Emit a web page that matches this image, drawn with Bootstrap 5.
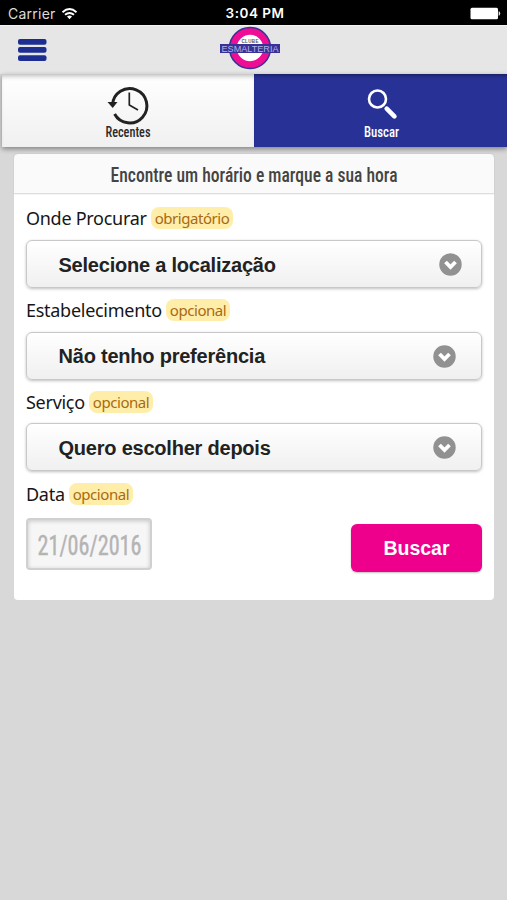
<!DOCTYPE html>
<html lang="pt-BR">
<head>
<meta charset="utf-8">
<meta name="viewport" content="width=device-width, initial-scale=1">
<title>Esmalteria - Buscar</title>
<link href="https://cdn.jsdelivr.net/npm/bootstrap@5.3.0/dist/css/bootstrap.min.css" rel="stylesheet">
<style>
body{background:#d8d8d8;font-family:"Liberation Sans",Arial,sans-serif;min-height:900px;overflow-x:hidden}
svg{display:block;flex:none;overflow:visible}
.condensed{font-family:"Roboto Condensed",Roboto,"Liberation Sans",sans-serif;font-stretch:75%}
.status{height:25px;background:#000;color:#fff;font:14px/25px Inter,sans-serif;padding:2px 5px 0 8px}
.status .carrier{color:#ddd;letter-spacing:.25px}
.status .clock{font-weight:600;font-size:13.5px;letter-spacing:.5px}
.topbar{height:49px;background:#e6e6e6;padding:0 18px;border-top:1px solid #f4f4f4}
.tabs{height:73px;margin-left:2px;box-shadow:0 2px 5px rgba(0,0,0,.4)}
.tab-item{border-radius:0;padding:0;color:#2b2b2b;border:0}
.tab-recent{width:252px;background:linear-gradient(#fff,#f0f0f0);box-shadow:inset 0 5px 5px -3px rgba(0,0,0,.28)}
.tab-search{background:#283296;box-shadow:inset 0 4px 4px -3px rgba(0,0,0,.45)}
.panel{margin:7px 13px 0 14px;height:446px;border:0;border-radius:4px;background:#fff}
.panel-title{height:40px;background:#fafafa;border-bottom:1px solid #dedede;border-radius:4px 4px 0 0!important;padding:0;box-shadow:0 0 1px #999}
.panel-form{padding:0 12px 0 12px}
.field-label{height:43.7px;padding-top:1px;font:18px/24px "Noto Sans","Open Sans",sans-serif;color:#161616;letter-spacing:-.28px}
.first-label{height:46px;padding-top:2px}
.hint{font:15px/22px "Noto Sans",sans-serif;letter-spacing:-.45px;background:#ffeeaa;color:#a86a12;border-radius:8px;height:22px;padding:0 4px;margin-left:4px}
.choice{height:48px;border:1px solid #c8c8c8;border-radius:6px;background:linear-gradient(#fff,#f0f0f0);box-shadow:0 1px 3px rgba(0,0,0,.25);font-weight:700;font-size:20px;letter-spacing:-.22px;color:#222;padding:1px 25px 0 31.5px}
.choice.wide{padding-right:19px}
.date-box{width:126px;height:52px;border:2px solid #d0d0d0;border-radius:4px;background:#f6f6f6;box-shadow:inset 0 1px 4px rgba(0,0,0,.2);margin-top:3px}
.go{width:131px;height:48px;background:#ef008c;border:0;border-radius:6px;color:#fff;font-weight:700;font-size:19.5px;margin-top:9px;padding-top:8px;box-shadow:0 1px 2px rgba(0,0,0,.25)}
.go:hover{background:#d8007f;color:#fff}
</style>
<script src="https://cdn.jsdelivr.net/npm/bootstrap@5.3.0/dist/js/bootstrap.bundle.min.js"></script>
</head>
<body>
<div class="status d-flex align-items-center">
  <div class="col d-flex align-items-center"><span class="carrier">Carrier</span>
    <svg class="ms-1" width="18" height="14" viewBox="0 0 18 14" fill="none" stroke="#fff" stroke-width="1.9"><path d="M2.500 5.200Q9.500-1 16.500 5.200M5 7.800Q9.500 4 14 7.800"/><path d="M7 9.600Q9.500 7.600 12 9.600L9.500 12.300Z" fill="#fff" stroke="none"/></svg>
  </div>
  <span class="clock">3:04 PM</span>
  <div class="col d-flex justify-content-end"><svg width="32" height="13" viewBox="0 0 32 13"><rect x=".5" y=".8" width="27.500" height="11.500" rx="1.500" fill="#fff"/><path d="M29 4.600q1.800 1.900 0 3.800z" fill="#fff" stroke="#fff" stroke-width=".6"/></svg></div>
</div>
<header class="topbar d-flex">
  <button class="btn p-0 border-0 col text-start" aria-label="Menu"><svg width="29" height="24" viewBox="0 0 29 24" fill="#1c2f91"><rect y="1" width="28.500" height="5.700" rx="2"/><rect y="9.100" width="28.500" height="5.700" rx="2"/><rect y="17.200" width="28.500" height="5.700" rx="2"/></svg></button>
  <svg width="62" height="46" viewBox="218 25 62 46">
    <circle cx="249" cy="47" r="17.300" fill="#fff" stroke="#3c2f96" stroke-width="8"/>
    <circle cx="249" cy="47" r="16.500" fill="#fff" stroke="#ee0d94" stroke-width="6.500"/>
    <text x="240.500" y="42.300" font-family="Liberation Sans" font-weight="700" font-size="4.500" textLength="17" fill="#555">CLUBE</text>
    <rect x="219" y="43" width="60" height="9" fill="#3b3096"/>
    <text x="220.500" y="50.800" font-family="Liberation Sans" font-size="9" textLength="57" lengthAdjust="spacingAndGlyphs" fill="#aeb4e6">ESMALTERIA</text>
  </svg>
  <div class="col me-2"></div>
</header>
<nav class="tabs d-flex">
  <a class="tab-item tab-recent btn d-flex justify-content-center" href="#" aria-label="Recentes">
    <svg width="60" height="73" viewBox="99 74 60 73">
      <path d="M113.500 105A17.200 17.200 0 1 1 115.600 114" fill="none" stroke="#222" stroke-width="3"/>
      <path d="M108.500 102h10l-4.800 6z" fill="#222"/>
      <path d="M130.300 92.500V105l8.700 5" fill="none" stroke="#222" stroke-width="1.700"/>
      <text class="condensed" x="106.500" y="136.800" font-size="14" font-weight="500" textLength="45" lengthAdjust="spacingAndGlyphs" fill="#292929">Recentes</text>
    </svg>
  </a>
  <a class="tab-item tab-search btn flex-fill d-flex justify-content-center" href="#" aria-label="Buscar">
    <svg width="60" height="73" viewBox="350.500 74 60 73">
      <circle cx="377" cy="99" r="8.500" fill="none" stroke="#fff" stroke-width="2.600"/>
      <path d="M386.200 108.700l7.700 7.700" stroke="#fff" stroke-width="4.600" stroke-linecap="round"/>
      <text class="condensed" x="363.500" y="136.800" font-size="14" font-weight="500" textLength="35" lengthAdjust="spacingAndGlyphs" fill="#fff">Buscar</text>
    </svg>
  </a>
</nav>
<main class="panel card">
  <div class="panel-title card-header d-flex justify-content-center">
    <svg width="300" height="39" viewBox="104 154 300 39"><text class="condensed" x="110.500" y="181.800" font-size="20.500" font-weight="500" textLength="287" lengthAdjust="spacingAndGlyphs" fill="#444">Encontre um horário e marque a sua hora</text></svg>
  </div>
  <form class="panel-form">
    <div class="field-label first-label d-flex align-items-center"><span>Onde Procurar</span><span class="hint">obrigatório</span></div>
    <div class="choice wide d-flex align-items-center justify-content-between"><span>Selecione a localização</span><svg width="23" height="23" viewBox="0 0 23 23"><circle cx="11.500" cy="11.500" r="11.200" fill="#919191"/><path d="M6.500 9l5 5 5-5" fill="none" stroke="#fff" stroke-width="3.800"/></svg></div>
    <div class="field-label d-flex align-items-center"><span>Estabelecimento</span><span class="hint">opcional</span></div>
    <div class="choice d-flex align-items-center justify-content-between"><span>Não tenho preferência</span><svg width="23" height="23" viewBox="0 0 23 23"><circle cx="11.500" cy="11.500" r="11.200" fill="#919191"/><path d="M6.500 9l5 5 5-5" fill="none" stroke="#fff" stroke-width="3.800"/></svg></div>
    <div class="field-label d-flex align-items-center"><span>Serviço</span><span class="hint">opcional</span></div>
    <div class="choice d-flex align-items-center justify-content-between"><span>Quero escolher depois</span><svg width="23" height="23" viewBox="0 0 23 23"><circle cx="11.500" cy="11.500" r="11.200" fill="#919191"/><path d="M6.500 9l5 5 5-5" fill="none" stroke="#fff" stroke-width="3.800"/></svg></div>
    <div class="field-label d-flex align-items-center"><span>Data</span><span class="hint">opcional</span></div>
    <div class="d-flex justify-content-between align-items-start">
      <div class="date-box"><svg width="122" height="48" viewBox="28 520 122 48"><text class="condensed" x="37.500" y="555" font-size="27" textLength="104" lengthAdjust="spacingAndGlyphs" fill="#b4b4b4" stroke="#b4b4b4" stroke-width=".4">21/06/2016</text></svg></div>
      <button type="button" class="go btn">Buscar</button>
    </div>
  </form>
</main>
</body>
</html>
